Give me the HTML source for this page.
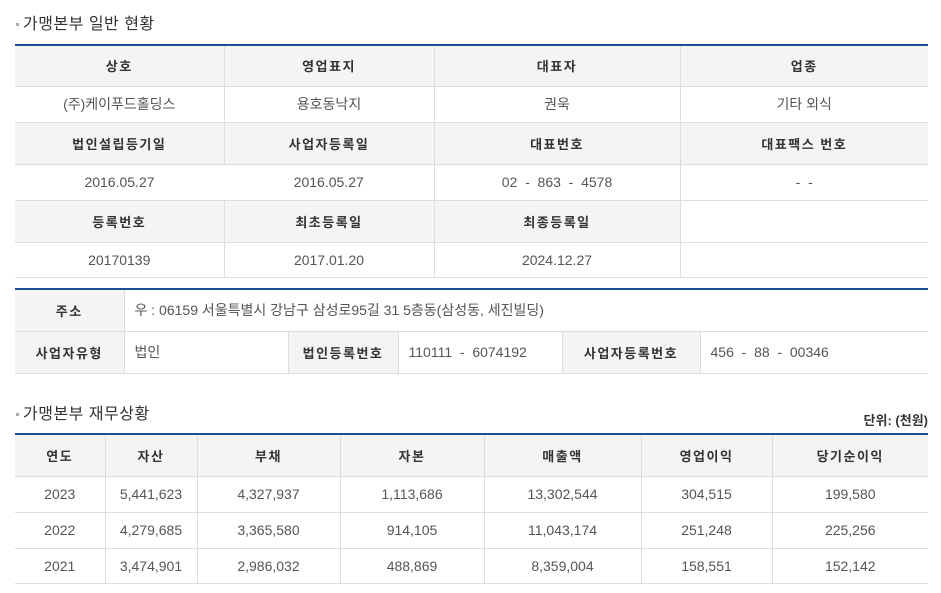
<!DOCTYPE html>
<html><head><meta charset="utf-8"><style>
body{margin:0;background:#fff;font-family:"Liberation Sans","Noto Sans CJK KR","NanumGothic",sans-serif;width:941px;height:593px;overflow:hidden;position:relative}
h2{position:absolute;left:16px;margin:0;font-size:16px;font-weight:normal;color:#333;letter-spacing:0.5px}
h2:before{content:"";display:inline-block;width:3px;height:3px;background:#aaa;margin-right:4px;vertical-align:middle}
table{position:absolute;left:15px;width:913px;border-collapse:collapse;table-layout:fixed;border-top:2px solid #1d4f91;font-size:14px}
td,th{border:1px solid #ddd;border-left:none;border-right:1px solid #ddd;text-align:center;color:#555;padding:0;font-weight:normal}
tr td:last-child,tr th:last-child{border-right:none}
th{background:#f4f4f4;color:#333;font-weight:bold;letter-spacing:1.5px;font-size:13px}
.l{text-align:left;padding-left:10px}
.unit{position:absolute;right:13px;top:410px;font-size:13px;font-weight:bold;color:#333}
</style></head><body>
<h2 style="top:10px">가맹본부 일반 현황</h2>
<table style="top:44px">
<colgroup><col style="width:209px"><col style="width:210px"><col style="width:246px"><col style="width:248px"></colgroup>
<tr style="height:41px"><th>상호</th><th>영업표지</th><th>대표자</th><th>업종</th></tr>
<tr style="height:36px"><td>(주)케이푸드홀딩스</td><td>용호동낙지</td><td>권욱</td><td>기타 외식</td></tr>
<tr style="height:42px"><th>법인설립등기일</th><th>사업자등록일</th><th>대표번호</th><th>대표팩스 번호</th></tr>
<tr style="height:36px"><td style="border-right:none">2016.05.27</td><td>2016.05.27</td><td>02 &nbsp;- &nbsp;863 &nbsp;- &nbsp;4578</td><td>- &nbsp;-</td></tr>
<tr style="height:42px"><th>등록번호</th><th>최초등록일</th><th>최종등록일</th><th style="background:#fff"></th></tr>
<tr style="height:35px"><td>20170139</td><td>2017.01.20</td><td>2024.12.27</td><td></td></tr>
</table>
<table style="top:288px">
<colgroup><col style="width:109px"><col style="width:164px"><col style="width:110px"><col style="width:164px"><col style="width:138px"><col style="width:228px"></colgroup>
<tr style="height:42px"><th>주소</th><td class="l" colspan="5">우 : 06159 서울특별시 강남구 삼성로95길 31 5층동(삼성동, 세진빌딩)</td></tr>
<tr style="height:42px"><th>사업자유형</th><td class="l">법인</td><th>법인등록번호</th><td class="l">110111 &nbsp;- &nbsp;6074192</td><th>사업자등록번호</th><td class="l">456 &nbsp;- &nbsp;88 &nbsp;- &nbsp;00346</td></tr>
</table>
<h2 style="top:400px">가맹본부 재무상황</h2>
<div class="unit">단위: (천원)</div>
<table style="top:433px">
<colgroup><col style="width:90px"><col style="width:92px"><col style="width:143px"><col style="width:144px"><col style="width:157px"><col style="width:131px"><col style="width:156px"></colgroup>
<tr style="height:42px"><th>연도</th><th>자산</th><th>부채</th><th>자본</th><th>매출액</th><th>영업이익</th><th>당기순이익</th></tr>
<tr style="height:36px"><td>2023</td><td>5,441,623</td><td>4,327,937</td><td>1,113,686</td><td>13,302,544</td><td>304,515</td><td>199,580</td></tr>
<tr style="height:36px"><td>2022</td><td>4,279,685</td><td>3,365,580</td><td>914,105</td><td>11,043,174</td><td>251,248</td><td>225,256</td></tr>
<tr style="height:35px"><td>2021</td><td>3,474,901</td><td>2,986,032</td><td>488,869</td><td>8,359,004</td><td>158,551</td><td>152,142</td></tr>
</table>
</body></html>
